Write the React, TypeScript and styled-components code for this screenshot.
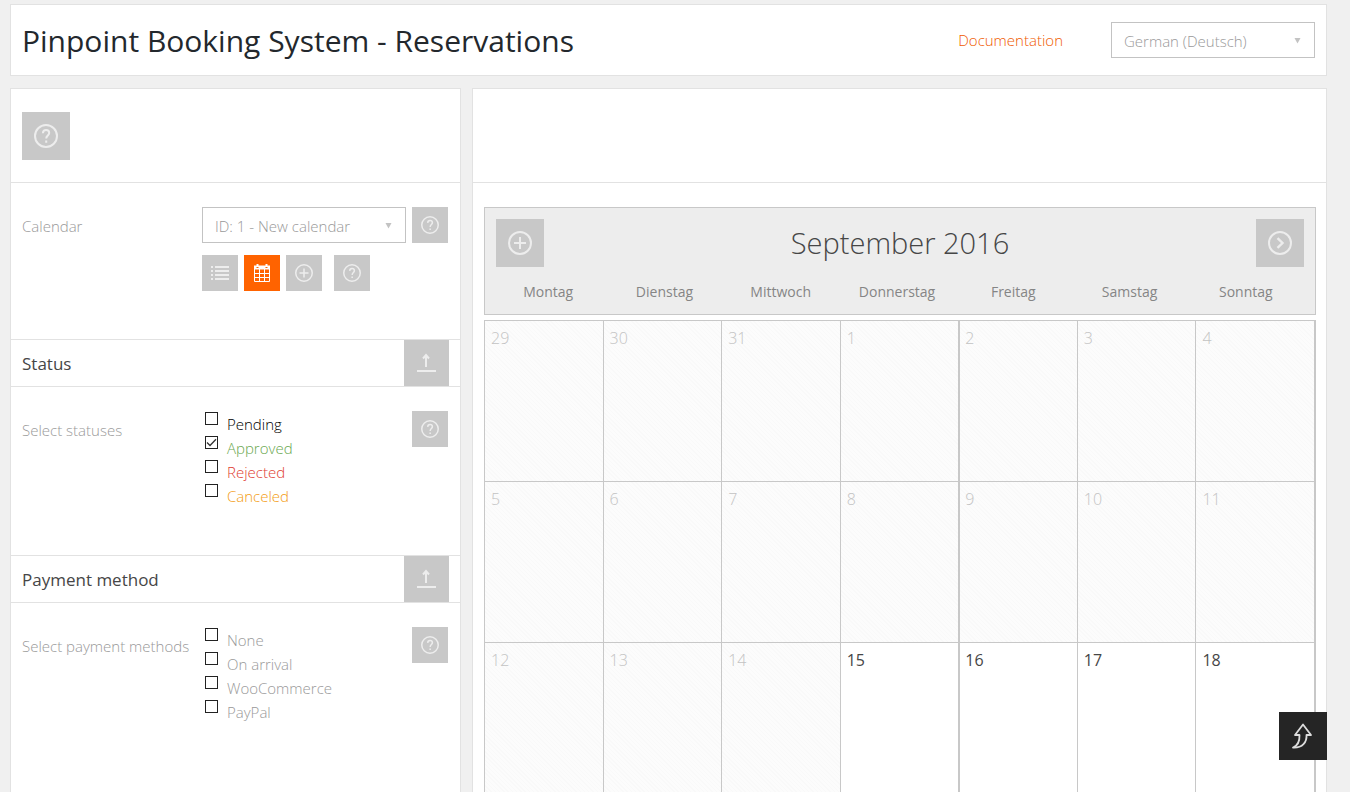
import React from "react";
import styled, { createGlobalStyle, css } from "styled-components";

const GlobalStyle = createGlobalStyle`
  *, *::before, *::after { box-sizing: border-box; }
  body {
    margin: 0;
    background: #f0f0f0;
    color: #999;
    font-family: "Open Sans", "Liberation Sans", sans-serif;
    font-size: 15px;
    font-weight: 300;
  }
  button, select, input { font: inherit; margin: 0; }
`;

const Page = styled.div`
  height: 100vh;
  overflow-y: auto;
  scrollbar-width: none;
  padding: 4px 23px 0 10px;
`;

const Header = styled.header`
  display: flex;
  align-items: center;
  height: 72px;
  padding: 0 11px;
  margin-bottom: 12px;
  background: #fff;
  border: 1px solid #e2e2e2;
`;

const Title = styled.h1`
  margin: 0 auto 0 0;
  padding-top: 2px;
  color: #23282d;
  font-size: 30px;
  font-weight: 400;
  line-height: 40px;
`;

const DocLink = styled.a`
  margin-right: 48px;
  color: #f05a00;
  text-decoration: none;
`;

const SelectWrap = styled.div`
  position: relative;
  width: 204px;
  color: #c3c3c3;
  svg {
    position: absolute;
    right: 14px;
    top: 15px;
    pointer-events: none;
  }
`;

const Select = styled.select`
  display: block;
  width: 100%;
  height: 36px;
  padding: 1px 24px 0 12px;
  appearance: none;
  background: #fff;
  border: 1px solid #c3c3c3;
  border-radius: 0;
  color: #999;
`;

const Columns = styled.main`
  display: grid;
  grid-template-columns: 451px minmax(0, 1fr);
  gap: 11px;
  min-height: calc(100% - 84px);
`;

const Panel = styled.section`
  background: #fff;
  border: 1px solid #e2e2e2;
`;

const TopBar = styled.div`
  height: 94px;
  padding: 23px 11px 0;
  border-bottom: 1px solid #e2e2e2;
`;

const Field = styled.div`
  display: grid;
  grid-template-columns: 180px 1fr auto;
  align-items: start;
  padding: 24px 12px 48px 11px;
`;

const fieldLabel = css`
  height: 36px;
  line-height: 38px;
  color: #999;
`;
const FieldLabel = styled.label`${fieldLabel}`;
const GroupLabel = styled.span`${fieldLabel}`;

const Tools = styled.div`
  display: flex;
  gap: 6px;
  grid-column: 2;
  margin-top: 12px;
`;

const IconButton = styled.button<{ $size?: number; $active?: boolean; $apart?: boolean }>`
  display: flex;
  align-items: center;
  justify-content: center;
  width: ${p => p.$size ?? 36}px;
  height: ${p => p.$size ?? 36}px;
  margin-left: ${p => (p.$apart ? 6 : 0)}px;
  padding: 0;
  border: 0;
  background: ${p => (p.$active ? "#ff6300" : "#c8c8c8")};
  color: ${p => (p.$active ? "#fff" : "#ededed")};
  cursor: pointer;
`;

const SectionHead = styled.div`
  display: flex;
  justify-content: space-between;
  padding: 0 11px;
  border: solid #e2e2e2;
  border-width: 1px 0;
`;

const SectionTitle = styled.h2`
  margin: 0;
  color: #464646;
  font-size: 17px;
  font-weight: 400;
  line-height: 48px;
  height: 46px;
`;

const Toggle = styled(IconButton)`
  width: 45px;
  height: 46px;
`;

const Options = styled.div`
  height: 96px;
  padding: 1px 0 0 3px;
`;

const Option = styled.label<{ $color?: string }>`
  display: flex;
  gap: 9px;
  height: 24px;
  line-height: 24px;
  color: ${p => p.$color ?? "#999"};
`;

const Box = styled.span`
  display: grid;
  width: 13px;
  height: 13px;
  color: #333;
  > * { grid-area: 1 / 1; }
  svg { visibility: hidden; pointer-events: none; }
  input:checked + svg { visibility: visible; }
`;

const Check = styled.input`
  width: 13px;
  height: 13px;
  appearance: none;
  background: #fff;
  border: 1px solid #222;
`;

const Calendar = styled.div`
  padding: 24px 10px 24px 11px;
`;

const CalendarHead = styled.div`
  padding: 11px 11px 10px;
  margin-bottom: 5px;
  background: #ededed;
  border: 1px solid #c8c8c8;
`;

const MonthBar = styled.div`
  display: flex;
  justify-content: space-between;
  align-items: center;
`;

const Month = styled.h2`
  margin: 0;
  color: #464646;
  font-size: 29px;
  font-weight: 300;
  line-height: 48px;
`;

const Weekdays = styled.div`
  display: grid;
  grid-template-columns: repeat(7, 1fr);
  margin: 13px 0 0 -6px;
  color: #858585;
  font-size: 14px;
  font-weight: 400;
  line-height: 24px;
  text-align: center;
`;

const Days = styled.table`
  width: 100%;
  table-layout: fixed;
  border-collapse: separate;
  border-spacing: 0;
  border-right: 2px solid #c8c8c8;
`;

const Day = styled.td<{ $past: boolean }>`
  height: 161px;
  padding: 5px 6px;
  vertical-align: top;
  border: solid #c8c8c8;
  border-width: 1px 0 0 1px;
  font-size: 16px;
  line-height: 24px;
  color: ${p => (p.$past ? "#c3c3c3" : "#464646")};
  font-weight: ${p => (p.$past ? 300 : 400)};
  background: ${p =>
    p.$past ? "repeating-linear-gradient(45deg, #f9f9f9 0 1px, #fcfcfc 1px 3px)" : "#fff"};
  &:nth-child(5) { border-left-width: 2px; padding-left: 5px; }
`;

const BackToTop = styled.button`
  position: fixed;
  right: 23px;
  bottom: 32px;
  display: flex;
  align-items: center;
  justify-content: center;
  width: 48px;
  height: 48px;
  padding: 0;
  border: 0;
  background: #252525;
  color: #ddd;
  cursor: pointer;
`;

const Svg = ({ size = 18, children }: { size?: number; children: React.ReactNode }) => (
  <svg width={size} height={size} viewBox="0 0 24 24" fill="none" stroke="currentColor" strokeWidth="2" aria-hidden="true">
    {children}
  </svg>
);

const HelpIcon = ({ size }: { size?: number }) => (
  <Svg size={size}>
    <circle cx="12" cy="12" r="11" />
    <path d="M8.900 9.200C9 7.200 10.300 6 12.100 6s3.100 1.200 3.100 2.900c0 2.500-3 2.600-3 5.600M12.200 16.600v2.200" />
  </Svg>
);

const PlusIcon = ({ size }: { size?: number }) => (
  <Svg size={size}>
    <circle cx="12" cy="12" r="11" />
    <path d="M12 6v12M6 12h12" />
  </Svg>
);

const NextIcon = () => (
  <Svg size={24}>
    <circle cx="12" cy="12" r="11" />
    <path d="M9.500 7.200 14.500 12l-5 4.800" strokeWidth="2.400" />
  </Svg>
);

const ListIcon = () => (
  <svg width="18" height="16" viewBox="0 0 18 16" fill="currentColor" aria-hidden="true">
    {[0, 4, 8, 12].map(y => (
      <path key={y} d={`M0 ${y + 1}h2v2H0zM4 ${y + 1}h14v2H4z`} />
    ))}
  </svg>
);

const CalendarIcon = () => (
  <svg width="18" height="18" viewBox="0 0 18 18" aria-hidden="true">
    <path d="M1 1.500h16v4H1z" fill="currentColor" />
    <path d="M1.500 5v12.500h15V5M1.500 9.500h15M1.500 13.500h15M6.500 5v12M11.500 5v12" fill="none" stroke="currentColor" />
    <path d="M4.500 0v3M13.500 0v3" stroke="currentColor" strokeWidth="2" />
    <path d="M3.500 3.500h2M12.500 3.500h2" stroke="#ff6300" />
  </svg>
);

const CollapseIcon = () => (
  <svg width="20" height="20" viewBox="0 0 20 20" fill="none" stroke="currentColor" aria-hidden="true">
    <path d="M9 14V2M6 5.500l3-3.500 3 3.500" strokeWidth="2" />
    <path d="M0 18h19" strokeWidth="2" />
  </svg>
);

const TopIcon = () => (
  <svg width="22" height="26" viewBox="0 0 22 26" fill="none" stroke="currentColor" strokeWidth="1.800" strokeLinejoin="round" aria-hidden="true">
    <path d="M11 1.500 19 12h-4.500c.5 7-4 13-13.500 12.500C6 22.500 7.800 19 7.500 12H3z" />
  </svg>
);

const Arrow = () => (
  <svg width="7" height="7" viewBox="0 0 7 7" fill="currentColor" aria-hidden="true">
    <path d="M0.500 1h6L3.500 6.500z" />
  </svg>
);

const Dropdown = ({ id, label, value }: { id: string; label?: string; value: string }) => (
  <SelectWrap>
    <Select id={id} aria-label={label}>
      <option>{value}</option>
    </Select>
    <Arrow />
  </SelectWrap>
);

type Choice = { name: string; color?: string; checked?: boolean };

const statuses: Choice[] = [
  { name: "Pending", color: "#000" },
  { name: "Approved", color: "#6aa84f", checked: true },
  { name: "Rejected", color: "#e03c31" },
  { name: "Canceled", color: "#f39c12" },
];

const payments: Choice[] = [
  { name: "None" },
  { name: "On arrival" },
  { name: "WooCommerce" },
  { name: "PayPal" },
];

const weekdays = ["Montag", "Dienstag", "Mittwoch", "Donnerstag", "Freitag", "Samstag", "Sonntag"];

const weeks = [
  [29, 30, 31, 1, 2, 3, 4],
  [5, 6, 7, 8, 9, 10, 11],
  [12, 13, 14, 15, 16, 17, 18],
];

const ChoiceSection = ({ id, title, label, choices }: { id: string; title: string; label: string; choices: Choice[] }) => (
  <>
    <SectionHead>
      <SectionTitle>{title}</SectionTitle>
      <Toggle type="button" aria-label={`Collapse ${title}`}><CollapseIcon /></Toggle>
    </SectionHead>
    <Field role="group" aria-labelledby={id}>
      <GroupLabel id={id}>{label}</GroupLabel>
      <Options>
        {choices.map(c => (
          <Option key={c.name} $color={c.color}>
            <Box>
              <Check type="checkbox" defaultChecked={c.checked} />
              <svg width="13" height="13" viewBox="0 0 13 13" fill="none" stroke="currentColor" strokeWidth="1.300" aria-hidden="true">
                <path d="M2 6.500 5 9.500 11 3.200" />
              </svg>
            </Box>
            {c.name}
          </Option>
        ))}
      </Options>
      <IconButton type="button" aria-label="Help"><HelpIcon /></IconButton>
    </Field>
  </>
);

export default function App() {
  return (
    <>
      <GlobalStyle />
      <Page>
        <Header>
          <Title>Pinpoint Booking System - Reservations</Title>
          <DocLink href="#documentation">Documentation</DocLink>
          <Dropdown id="language" label="Language" value="German (Deutsch)" />
        </Header>
        <Columns>
          <Panel>
            <TopBar>
              <IconButton type="button" $size={48} aria-label="Help"><HelpIcon size={24} /></IconButton>
            </TopBar>
            <Field>
              <FieldLabel htmlFor="calendar">Calendar</FieldLabel>
              <Dropdown id="calendar" value="ID: 1 - New calendar" />
              <IconButton type="button" aria-label="Help"><HelpIcon /></IconButton>
              <Tools>
                <IconButton type="button" aria-label="List view"><ListIcon /></IconButton>
                <IconButton type="button" $active aria-label="Calendar view"><CalendarIcon /></IconButton>
                <IconButton type="button" aria-label="Add reservation"><PlusIcon /></IconButton>
                <IconButton type="button" $apart aria-label="Help"><HelpIcon /></IconButton>
              </Tools>
            </Field>
            <ChoiceSection id="status" title="Status" label="Select statuses" choices={statuses} />
            <ChoiceSection id="payment" title="Payment method" label="Select payment methods" choices={payments} />
          </Panel>
          <Panel>
            <TopBar />
            <Calendar>
              <CalendarHead>
                <MonthBar>
                  <IconButton type="button" $size={48} aria-label="Add month"><PlusIcon size={24} /></IconButton>
                  <Month>September 2016</Month>
                  <IconButton type="button" $size={48} aria-label="Next month"><NextIcon /></IconButton>
                </MonthBar>
                <Weekdays>
                  {weekdays.map(d => <span key={d}>{d}</span>)}
                </Weekdays>
              </CalendarHead>
              <Days>
                <tbody>
                  {weeks.map((week, w) => (
                    <tr key={w}>
                      {week.map(d => <Day key={d} $past={w < 2 || d < 15}>{d}</Day>)}
                    </tr>
                  ))}
                </tbody>
              </Days>
            </Calendar>
          </Panel>
        </Columns>
        <BackToTop type="button" aria-label="Back to top"><TopIcon /></BackToTop>
      </Page>
    </>
  );
}
